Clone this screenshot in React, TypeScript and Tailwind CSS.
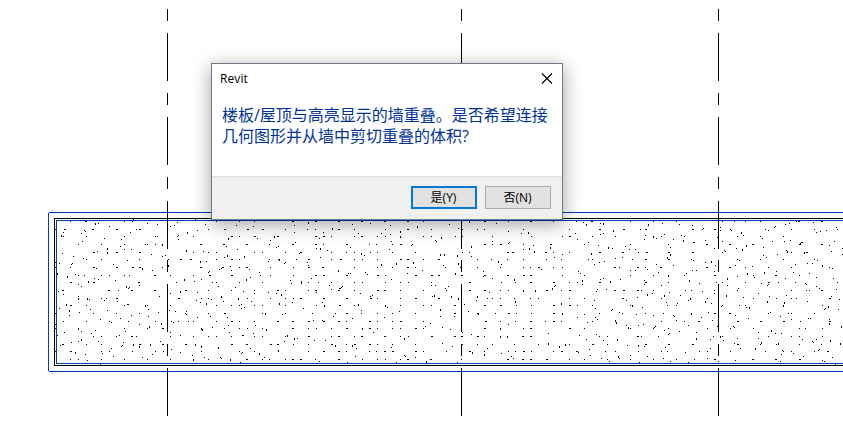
const INK = "#000000";
const EDGE = "#003cb4";

// Concrete hatch. Each patch lists rows as "y:x x x" in thirds of a pixel,
// "w" marks a two pixel wide speck and "t" a two pixel tall one.
type Patch = { x: number; y: number; rows: string };

const PATCHES: Patch[] = [
  {
    x: 40,
    y: 200,
    rows: `64:91 137w 253 277;58:280;70:166t 175 322;73:352;79:208 391;76:403;67:412;88:46w 74w 157w 231w 289 299w;91:133;94:136;97:70 271 442t;100:124;106:64t 415;109:70 139 253 346 352 412;115:193;118:244 415;124:127;133:115 184 253 316 322 346 367t;139:241;145:202t;148:253 274;151:439t;154:172;157:160w 202t 231w 299w;160:67;163:334;166:376;169:100 367;175:130;178:139 184 298 421w 385;181:262;187:46w;190:58 97;193:94 220;196:385t;202:46w 91 160w 231w 279w 298w 367;205:169 307t;211:337;220:52t;223:106;226:115 133 184 208 253 268 345w 391;229:82t;235:163;238:175 433t;244:145t;247:91w 162w 297w 409;241:226;253:115;256:298;259:124 259t;262:268;265:265;271:69w 207w 235 276w 345w 436w;274:55 421t;280:391;283:70;289:115 358;295:115t 142t 184 199 229w 415w;298:148`,
  },
  {
    x: 40,
    y: 300,
    rows: `1:193;4:232;13:79t 264w;16:91w 139 253 316t 322 391;25:58;28:151 325;31:88t 202 388;34:406 439;37:118 355;40:46w 160 229 298 436;43:439;46:88 274;49:325;55:241;58:181;64:70 139 208 265 346 394 415 445;67:214 400;70:364t;73:46w 298;79:328t;85:46w 115t 253 322 369w;91:166;94:124 256;97:73 391;100:154;106:52 238 421;109:160 184 229 276w 289 391;118:124t;124:115 175 361;127:94 250;133:69w 139 184 280t 300w 331t 369w 438w;136:61 247;139:244 298t;145:214;148:394;154:46w 93w 184 208 277 346 370;157:106t 421;160:187;163:136 337;169:220;172:307;178:91 115 184 253 322 391;181:142;193:181`,
  },
  {
    x: 190,
    y: 218,
    rows: `4:16;10:79 148 193 309w 378w 447w 516w 585w 654w 700;13:355t;16:541;19:46 487;22:139 313 601;25:190 681t;31:427t;34:55 103w 172w 219w 286 352 376 447w 493 585 654w 724;37:22;40:631t;43:313 400;46:506 574;49:601;55:10 124w 148 195w 253t 264w 378w 402w 424 493 516w 562 585 631t 700 724;61:115t 202 388;67:240 736;70:604 739;73:316;79:31w 102w 171w 238 309w 378w 400 469w 538 559 607 633w 667;82:664;85:109 265;88:259 481;91:379 391t;94:142 598;97:412;100:40;103:10 55 79 193 217 286 331w 424 468 493 541 562 607 676;106:328 514t;112:112t 523;115:163t;118:103 391;124:1w 79 124w 148 238 267w 319 357w 424 453w 493 517 562 633w 654w 700 747w;127:268;130:31t 49 235;133:286 352 670t;136:283 619t;139:574t;142:355;145:121;148:33w 97w 148 171w 241 310 357w 399w 493 562 607 654w 676;151:94;154:88 178;157:124 445t 697;160:58;163:55 208 526;166:475 481 652;172:10 58w 126w 211 241 310 378w 402w 469w 562w 585 678w 724w 747w;169:532;178:181;181:364;184:34 169t 604;187:301;190:13 334t;193:67 79 148 217 355 385 424 493 516 585 631 654 724;196:304 334;202:418 724 736;205:85 457;208:136 454;211:448w;214:424;217:55 124 193 262w 286 355 378w 447w 493 562w 583w 631 700;220:160;223:22 235 379;226:193 259 511;229:274t;232:547 733t;235:94t 541 727;241:34 55 145t 172 241 286 310 333w 402w 469w 541w 562 631 678w 747w;244:64;247:19;250:100 184;253:31 307 397;256:49t 268t;259:154 505t;262:79 124 148 193 217 286 378 402t 450w 493 585t 631 700 724;268:163 592;271:154 340;276:514;280:627;286:55 103w 217 225t 286 367 436 469w 514 562 607 676;289:277;295:61 430;298:22 112 583;301:487;307:370 397;310:10 79 126w 148 193 264w 309w 357w 402w 447w 469 538w 562 607 631w 700;316:721;322:115 196;325:706;328:67;331:34t 103 148 172 217 307w 355 378 424 469w 517t 538w 562 607 631 678w 700;334:37t 229t;343:118 550;346:190;352:159w 292t;355:10 55 79 124 193 217 286 357w 424 447w 493 516w 585w 631 654 724w;361:313t 322 643t;367:373 406;370:283;379:16t 126w 171w 241w 264w 310 355 424w 469 493w 538w 562 607 676;382:436t 487t;385:34t;388:85t 604;391:181 499;397:265t;400:33 148 193 355 402w 447w 469 538 559 585w 609w 678w 700;403:157;406:154 208t;412:7 643;415:496 646;418:43 91 223 676;421:94;424:10t 55 121t 171w 217 238 286 309w 331w 376 447w 516 562 585 631 654w 721w;430:388 709t;433:151 472 619`,
  },
  {
    x: 440,
    y: 200,
    rows: `64:88t 133w 205 273w 340 409;70:169;73:28;88:64w 112 133 250 388;85:55;94:205;97:265t;100:244 406;109:46 64w 157 274 367 388w;112:4t;118:412;124:157;127:208;130:205;133:133w 157 181w 250 331w;136:280;139:94t;142:331t;145:268t;148:250;154:283t;157:88 202w 217w 316w 340 388 66;163:1t 13t 367;166:52t;169:94;172:343;178:112 154 202 250 319 364;184:175t;190:55t;193:184;196:10;202:16 61w 112 181 250 271 297w 340 367;208:304;214:130 415;220:46t;226:66w 133w 202w 250w 271w 367;229:130;235:157;238:223t;241:427t;247:88w 184 226 272w 342w 388 412;256:346;259:25 343;265:16 337t;271:19 88w 133w 181 205 250t 286t 319w 364 388w;277:148;289:34t 112t;295:55t 142 157 181 223 271 295 388;301:109;304:226t;310:364t;313:73;316:43w 133w 181w 229 274 340w 388w 412;328:1t;334:85;340:43w 112w 166 205w 229 274 342w 367t;343:115;349:1 43;352:412;364:64 136w 181 226 273w 316 340w 364;373:205;382:7;385:133w 181t 250 271w 388w;388:31;397:67;400:325;403:94;406:418;409:43w 64w 112w 133 181t 202t 249w 273w;430:7 325t;433:67 112 157 223 295 376t 388;439:37 358t;445:142;454:19 88w 133 205 226 250w 274 340 364w 411w;457:97t 415;460:184;463:133t;469:214;475:220;478:64 202w 249w 271w 319w 388;487:52`,
  },
  {
    x: 580,
    y: 218,
    rows: `10:36w 151 220 289;13:10;16:61 70t 247;19:19t 205t 298;22:337;34:60w 130w 181 198w 337w;37:100t;46:70;49:61 253;52:196 304;55:37 106 220t 244 313;61:229;64:193 280;67:310t;73:25 340w;79:13 151 265;82:55;85:136;88:85t 271;91:97;94:148 166;103:60w 129w 175 199w 267w 337w;106:34t;109:271t;118:127 262t;121:106;124:25 37 157 198w 267w 334;127:340;130:73;133:58;139:43 229;142:280;148:105w 118 174w 196 243w;154:202;157:151 166 337 349;163:235;166:1 319;172:13 151 220 265t 313;181:70;184:61 121;187:7 193 328t;190:91t;193:60w 198w 265;196:358;199:7 193;202:244;214:52 79;217:103w 130w 174w 184 220 316 334;220:49;223:268;226:217;229:202t;232:253t 301;238:172;241:13 129w 244 331t;247:43 139 325;253:259;256:292;262:37 151 157t 262 289;268:187;271:46;274:97;277:94;283:118;286:58 127 196 250 334t;289:13 169;292:220 280;295:283;298:46;304:52;307:106t 289;310:37 244 313 357w;313:22 109t;319:190;322:139 175 325;325:226;328:145t 223;331:13 151 220 265;337:253;340:298;343:349;346:268;349:49 265;355:58 82 174w 184 235;361:349t;364:19 112t;367:70;379:39w 82 198w 267w 337w;382:142 175t;385:193;388:256;394:28;400:76 106 175 244 262 358;403:316;412:31 151;415:115t 202;421:64 118 250;424:13 82 151 220 289 343;430:88 271;433:178 325`,
  },
  {
    x: 700,
    y: 200,
    rows: `64:67 103 136 181 289 297w 366w;67:340;70:268;73:256;79:226;82:61 223 409;85:10;88:7 45w 91 196 274 343 412;91:61 94 205 379;94:361;97:124t 349;106:130;109:112 181 250;112:52;115:187;121:16 271;124:67 217 253 403;127:304w;130:301;133:21w 90w 159w 298w 366w;136:139t 388;142:190;145:43 109 427;148:127t;151:73 259;154:76 262t 394;157:67 274 321w 313t;163:232 427;166:190;172:199;178:112 181 250 343;181:118 352;184:34t;187:16;190:322 337;193:286;196:46 106 367t;199:157;202:21w 90w 136 205 274 388;205:397;214:43 229;217:193t 280;220:142t 328;226:45w 160 226w 298;229:112;232:163 349;235:82t 256 400;247:49 67 136 205w 235 286 412;250:184 316;253:205 319;256:82 202;259:349;265:115 358;268:409;271:43 112 274 319 328 366w;274:7;280:43 175;286:79t 259;289:208 394;292:130;295:22 160 229 274 289 390w;298:418;304:16t 202t 322;307:253t;310:34;316:67 118 136 250t 367;319:64 385t;322:139 148t;325:376;328:373 415;337:25 211;340:45w 90w 205 265 274 343;346:106;349:241;352:4;355:145 325 331;358:274 388;361:37;364:114w 183w 252w 301 390w;370:388t;379:52 100 424t;382:103;385:22 91 160 298 316 367;391:214t;397:175;400:226 244;409:40 61t 67 205 274 298 367;415:112 175;418:31 307 349;421:70 391t;424:337;427:184t 340;430:103 235t 421t;433:114w 181 229 298 364;445:31 121 166t;448:358;451:247 355;454:22 91 196 250 274 343 382w;460:280;463:244;469:310;472:397;475:22;478:45w 159w 228w 298w;481:106 367;484:55 241 373;493:406`,
  },
];

function specks(patch: Patch): string {
  let d = "";
  for (const row of patch.rows.split(";")) {
    const [ys, xs] = row.trim().split(":");
    const y = patch.y + Math.floor(Number(ys) / 3);
    for (const item of xs.split(" ")) {
      const wide = item.endsWith("w");
      const tall = item.endsWith("t");
      const at = parseInt(item, 10);
      const x = patch.x + Math.floor((wide ? at - 1 : at) / 3);
      const w = wide ? 2 : 1;
      const h = tall ? 2 : 1;
      d += `M${x} ${y}h${w}v${h}h${-w}z`;
    }
  }
  return d;
}

const GRID_X = [167, 461, 718];
const DASHES = [
  [9, 21],
  [33, 81],
  [93, 105],
  [117, 165],
  [177, 189],
  [201, 249],
  [260, 272],
  [284, 332],
  [344, 356],
  [368, 416],
];

function Drawing() {
  return (
    <svg
      className="block"
      width="843"
      height="424"
      viewBox="0 0 843 424"
      shapeRendering="crispEdges"
      aria-hidden="true"
    >
      <g fill={INK}>
        {PATCHES.map((p, i) => (
          <path key={i} d={specks(p)} />
        ))}
      </g>
      <path d="M54 218H843v1H55V365H843v1H54z" fill={INK} />
      <g fill={EDGE}>
        <path d="M56 220H843v1H57V363H843v1H56z" />
        <path d="M49 212H843v1H49V371H843v1H49V371H48V213H49z" />
      </g>
      <g fill={INK}>
        {GRID_X.map((x) =>
          DASHES.map(([a, b]) => (
            <rect key={`${x}-${a}`} x={x} y={a} width="1" height={b - a} />
          )),
        )}
      </g>
    </svg>
  );
}

function DialogButton({ label, primary }: { label: string; primary?: boolean }) {
  return (
    <button
      type="button"
      className={
        "flex h-[23px] w-[66px] items-center justify-center bg-[#e1e1e1] pr-px text-[12px] leading-none text-black " +
        (primary ? "border-2 border-[#0078d7]" : "border border-[#adadad]")
      }
    >
      {label}
    </button>
  );
}

function Dialog() {
  return (
    <section
      role="dialog"
      className="absolute left-[211px] top-[63px] flex h-[157px] w-[352px] flex-col border border-[#6f7a88] bg-white shadow-[0_4px_18px_rgba(0,0,0,0.38)]"
    >
      <header className="flex h-[30px] items-center justify-between pl-[8px] pr-[9px]">
        <h1 className="text-[12px] leading-none tracking-[0.1px] text-black">Revit</h1>
        <button type="button" aria-label="关闭" className="flex pb-px">
          <svg width="12" height="11" viewBox="0 0 12 11" fill="none">
            <path d="M1 0.5L11 10.5M11 0.5L1 10.5" stroke="#000" strokeWidth="1.1" />
          </svg>
        </button>
      </header>
      <p className="flex-1 whitespace-nowrap pl-[10px] pt-[11px] text-[16px] leading-[21px] text-[#003399]">
        楼板/屋顶与高亮显示的墙重叠。是否希望连接
        <br />
        几何图形并从墙中剪切重叠的体积?
      </p>
      <footer className="flex h-[43px] justify-end gap-2 border-t border-[#dfdfdf] bg-[#f0f0f0] pr-[11px] pt-[9px]">
        <DialogButton label="是(Y)" primary />
        <DialogButton label="否(N)" />
      </footer>
    </section>
  );
}

export default function App() {
  return (
    <main className="relative h-[424px] w-[843px] overflow-hidden bg-white font-['Open_Sans','Noto_Sans_CJK_SC',sans-serif]">
      <Drawing />
      <Dialog />
    </main>
  );
}
